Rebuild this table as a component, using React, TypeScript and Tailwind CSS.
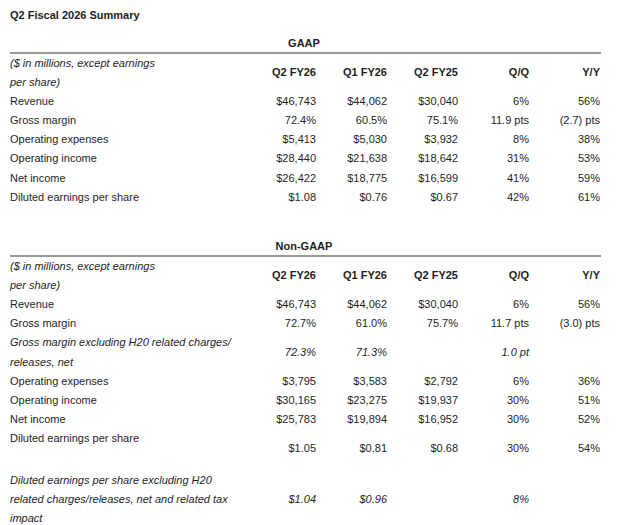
type Row = {
  label: string[];
  values: string[];
  italic?: boolean;
  top?: boolean;
};

const gaapRows: Row[] = [
  { label: ['Revenue'], values: ['$46,743', '$44,062', '$30,040', '6%', '56%'] },
  { label: ['Gross margin'], values: ['72.4%', '60.5%', '75.1%', '11.9 pts', '(2.7) pts'] },
  { label: ['Operating expenses'], values: ['$5,413', '$5,030', '$3,932', '8%', '38%'] },
  { label: ['Operating income'], values: ['$28,440', '$21,638', '$18,642', '31%', '53%'] },
  { label: ['Net income'], values: ['$26,422', '$18,775', '$16,599', '41%', '59%'] },
  { label: ['Diluted earnings per share'], values: ['$1.08', '$0.76', '$0.67', '42%', '61%'] },
];

const nonGaapRows: Row[] = [
  { label: ['Revenue'], values: ['$46,743', '$44,062', '$30,040', '6%', '56%'] },
  { label: ['Gross margin'], values: ['72.7%', '61.0%', '75.7%', '11.7 pts', '(3.0) pts'] },
  {
    label: ['Gross margin excluding H20 related charges/', 'releases, net'],
    values: ['72.3%', '71.3%', '', '1.0 pt', ''],
    italic: true,
  },
  { label: ['Operating expenses'], values: ['$3,795', '$3,583', '$2,792', '6%', '36%'] },
  { label: ['Operating income'], values: ['$30,165', '$23,275', '$19,937', '30%', '51%'] },
  { label: ['Net income'], values: ['$25,783', '$19,894', '$16,952', '30%', '52%'] },
  { label: ['Diluted earnings per share', ''], values: ['$1.05', '$0.81', '$0.68', '30%', '54%'] },
  {
    label: [
      'Diluted earnings per share excluding H20',
      'related charges/releases, net and related tax',
      'impact',
    ],
    values: ['$1.04', '$0.96', '', '8%', ''],
    italic: true,
    top: true,
  },
];

const columns = ['Q2 FY26', 'Q1 FY26', 'Q2 FY25', 'Q/Q', 'Y/Y'];

function Section({ title, rows }: { title: string; rows: Row[] }) {
  return (
    <div>
      {/* section title centred over the first data column */}
      <div className="w-[588px] text-center font-bold leading-[17px]">{title}</div>
      <div className="h-[1.5px] w-[591px] bg-[#999999]" />

      {/* Header */}
      <div className="grid grid-cols-[235px_repeat(5,71px)] items-center leading-[19.2px]">
        <div className="italic">
          <div className="h-[19.2px]">($ in millions, except earnings</div>
          <div className="h-[19.2px]">per share)</div>
        </div>
        {columns.map((c) => (
          <div key={c} className="text-right font-bold">
            {c}
          </div>
        ))}
      </div>

      {rows.map((row, i) => (
        <div
          key={i}
          className={`grid grid-cols-[235px_repeat(5,71px)] items-center leading-[19.2px] ${row.italic ? 'italic' : ''} ${row.top ? 'mt-[3px]' : ''}`}
        >
          <div>
            {row.label.map((l, j) => (
              <div key={j} className="h-[19.2px] whitespace-nowrap">
                {l}
              </div>
            ))}
          </div>
          {row.values.map((v, j) => (
            <div key={j} className="text-right">
              {v}
            </div>
          ))}
        </div>
      ))}
    </div>
  );
}

export default function App() {
  return (
    <div className="w-[638px] h-[525px] overflow-hidden bg-white px-[10px] pt-[6px] text-[11px] text-[#1e1e1e] font-['Liberation_Sans',Arial,sans-serif]">
      <h1 className="font-bold text-[11px] leading-[18px]">Q2 Fiscal 2026 Summary</h1>
      <div className="mt-[11px]">
        <Section title="GAAP" rows={gaapRows} />
      </div>
      <div className="mt-[31px]">
        <Section title="Non-GAAP" rows={nonGaapRows} />
      </div>
    </div>
  );
}
